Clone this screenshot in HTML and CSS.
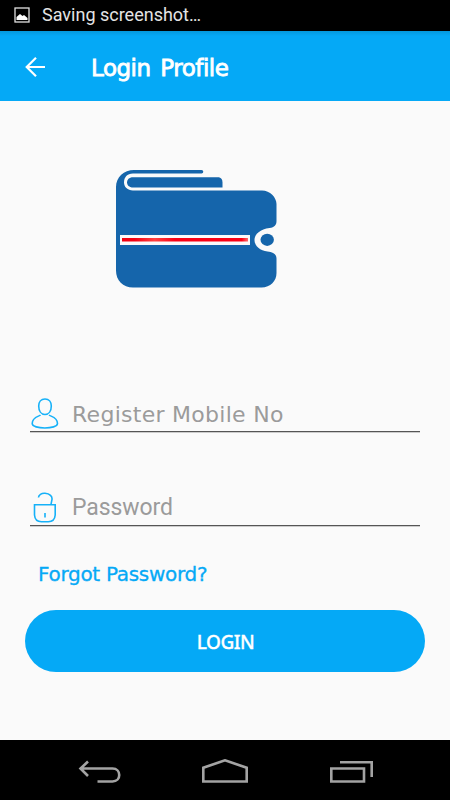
FILE: index.html
```html
<!DOCTYPE html>
<html lang="en">

<head>
    <meta charset="UTF-8">
    <meta name="viewport" content="width=device-width, initial-scale=1.0">
    <title>Login Profile</title>
    <link rel="stylesheet" href="styles.css">
</head>

<body>
    <div class="status-bar">
        <svg width="16" height="16" viewBox="0 0 16 16">
            <rect x="1" y="1" width="14" height="14" fill="none" stroke="#e0e0e0" stroke-width="1.3" />
            <path d="M2.500 13V10l3.500-3 2.500 2 1.500-1 3.500 3v2z" fill="#fff" />
        </svg>
        <span>Saving screenshot…</span>
    </div>
    <div class="toolbar">
        <svg class="back" width="22" height="22" viewBox="0 0 22 22">
            <path d="M20 11H2M11 1.700L1.700 11l9.300 9.300" fill="none" stroke="#fff" stroke-width="2.200" />
        </svg>
        <h1>Login Profile</h1>
    </div>

    <form class="content" onsubmit="return false">
        <svg class="logo" width="162" height="120" viewBox="115 169 162 120">
            <defs>
                <linearGradient id="stripe">
                    <stop offset="0" stop-color="#f20012" />
                    <stop offset=".1" stop-color="#f20012" />
                    <stop offset=".26" stop-color="#ff4040" />
                    <stop offset=".42" stop-color="#f90014" />
                    <stop offset=".95" stop-color="#f90014" />
                    <stop offset="1" stop-color="#ff6868" />
                </linearGradient>
            </defs>
            <path d="M134 170H201.500a1.800 1.800 0 0 1 0 3.600H133c-6 0-9 4-9 8.700s3.500 8.200 9 8.200H262c8 0 14.500 7 14.500 13.500V221c0 4-2 6.500-7 7-9 1-15 6-15 12s6 11 13 11.500c6 .5 9 3 9 7V273c0 8-6 14.500-15 14.500H133c-10 0-17-7-17-17V187c0-10 8-17 18-17z" fill="#1565ab" />
            <path d="M133 177.200H219q3.500 1 3.500 5v5.300H133c-8 0-8-10.300 0-10.300z" fill="#1565ab" />
            <rect x="120" y="235" width="130" height="10" fill="#fafafa" />
            <rect x="122" y="238" width="126" height="3.500" fill="url(#stripe)" />
            <ellipse cx="267.200" cy="239.800" rx="6.700" ry="6.100" fill="#1565ab" />
        </svg>

        <label class="field mobile">
            <svg width="30" height="32" viewBox="30 397 30 32">
                <path d="M45 399c-4 0-6.300 3-6.300 7 0 5 2.500 8.500 6.300 8.500s6.300-3.500 6.300-8.500c0-4-2.300-7-6.300-7zM40.500 415c-1.500 1.500-8.300 2-8.300 8.500 0 6 25.300 6 25.300 0 0-6.500-7-7-8.500-8.500" />
            </svg>
            <input type="text" placeholder="Register Mobile No">
        </label>
        <label class="field password">
            <svg width="30" height="32" viewBox="30 491 30 32">
                <path d="M38.500 497.500c0-2.500 3-4.500 6.500-4.200 5 .4 7.300 3 7 6l-1 5M34.500 504.700H55.200V515q-.5 6.700-7 6.700H41.500q-6.500 0-7-6.700zM45 513v4.500" />
            </svg>
            <input type="password" placeholder="Password">
        </label>
        <a class="forgot">Forgot Password?</a>
        <button class="login">LOGIN</button>
    </form>

    <div class="nav-bar">
        <svg width="44" height="26" viewBox="78 759 44 26">
            <path d="M88 761.500l-7.500 7L88 776M81 768.500H112.500c9 0 9 13 0 13H97.500" />
        </svg>
        <svg width="48" height="26" viewBox="201 759 48 26">
            <path d="M203.300 781.500V767.700L225 760.300l21.700 7.400v13.800z" />
        </svg>
        <svg width="46" height="26" viewBox="328 759 46 26">
            <path d="M331.300 768.500H364v13H331.300zM340 762.300H371.700V777" />
        </svg>
    </div>
</body>

</html>
```
FILE: styles.css
```css
html,
body {
    margin: 0;
}

body {
    display: flex;
    flex-direction: column;
    height: 800px;
    background-color: #fafafa;
    font-family: "DejaVu Sans", sans-serif;
}

.status-bar {
    display: flex;
    align-items: center;
    height: 31px;
    padding-left: 14px;
    background-color: #000;
    color: #e4e4e4;
    font: 18px/30px Roboto, sans-serif;
}

.status-bar svg {
    margin-bottom: 2px;
}

.status-bar span {
    margin: 0 0 2px 12px;
}

.toolbar {
    display: flex;
    align-items: center;
    height: 70px;
    padding-left: 25px;
    background: linear-gradient(#0498dc, #05a9f6 5px);
    color: #fff;
}

.back {
    margin-top: 2px;
}

.toolbar h1 {
    margin: 3px 0 0 44px;
    font-size: 23px;
    font-weight: 400;
    line-height: 30px;
    letter-spacing: -0.5px;
    word-spacing: 3px;
    -webkit-text-stroke: 0.8px #fff;
}

.content {
    flex: 1;
    display: flex;
    flex-direction: column;
    padding: 68px 25px 0;
}

.logo {
    margin-left: 90px;
}

.field {
    display: flex;
    align-items: center;
    box-sizing: border-box;
    height: 37px;
    margin: 0 5px;
    border-bottom: 1px solid #555;
    box-shadow: 0 1px #ccc;
}

.mobile {
    margin-top: 106px;
}

.password {
    margin-top: 57px;
}

.field svg {
    fill: none;
    stroke: #16b1f8;
    stroke-width: 1.6;
}

.field input {
    flex: 1;
    margin: 4px 0 0 12px;
    padding: 0;
    border: none;
    outline: 0;
    background: none;
    font: 22px/30px "DejaVu Sans", sans-serif;
    letter-spacing: 0.28px;
}

.password input {
    margin-top: 2px;
    font: 23px/30px Roboto, sans-serif;
    letter-spacing: -0.1px;
}

.field input::placeholder {
    color: #9b9b9b;
}

.forgot {
    margin: 33px 0 0 13px;
    color: #05a9f6;
    font-size: 20px;
    line-height: 30px;
    letter-spacing: -0.3px;
    -webkit-text-stroke: 0.3px #05a9f6;
}

.login {
    height: 62px;
    margin-top: 21px;
    padding: 2px 0 0 1px;
    border: none;
    border-radius: 31px;
    background-color: #05a9f6;
    color: #fff;
    font-family: "Noto Sans", sans-serif;
    font-size: 19px;
    font-weight: 500;
    letter-spacing: -0.5px;
    -webkit-text-stroke: 0.3px #fff;
}

.nav-bar {
    display: flex;
    justify-content: space-between;
    align-items: center;
    height: 60px;
    padding: 0 76px 0 78px;
    background-color: #000;
}

.nav-bar svg {
    margin-top: 4px;
    fill: none;
    stroke: #a3a3a3;
    stroke-width: 2.6;
}
```
